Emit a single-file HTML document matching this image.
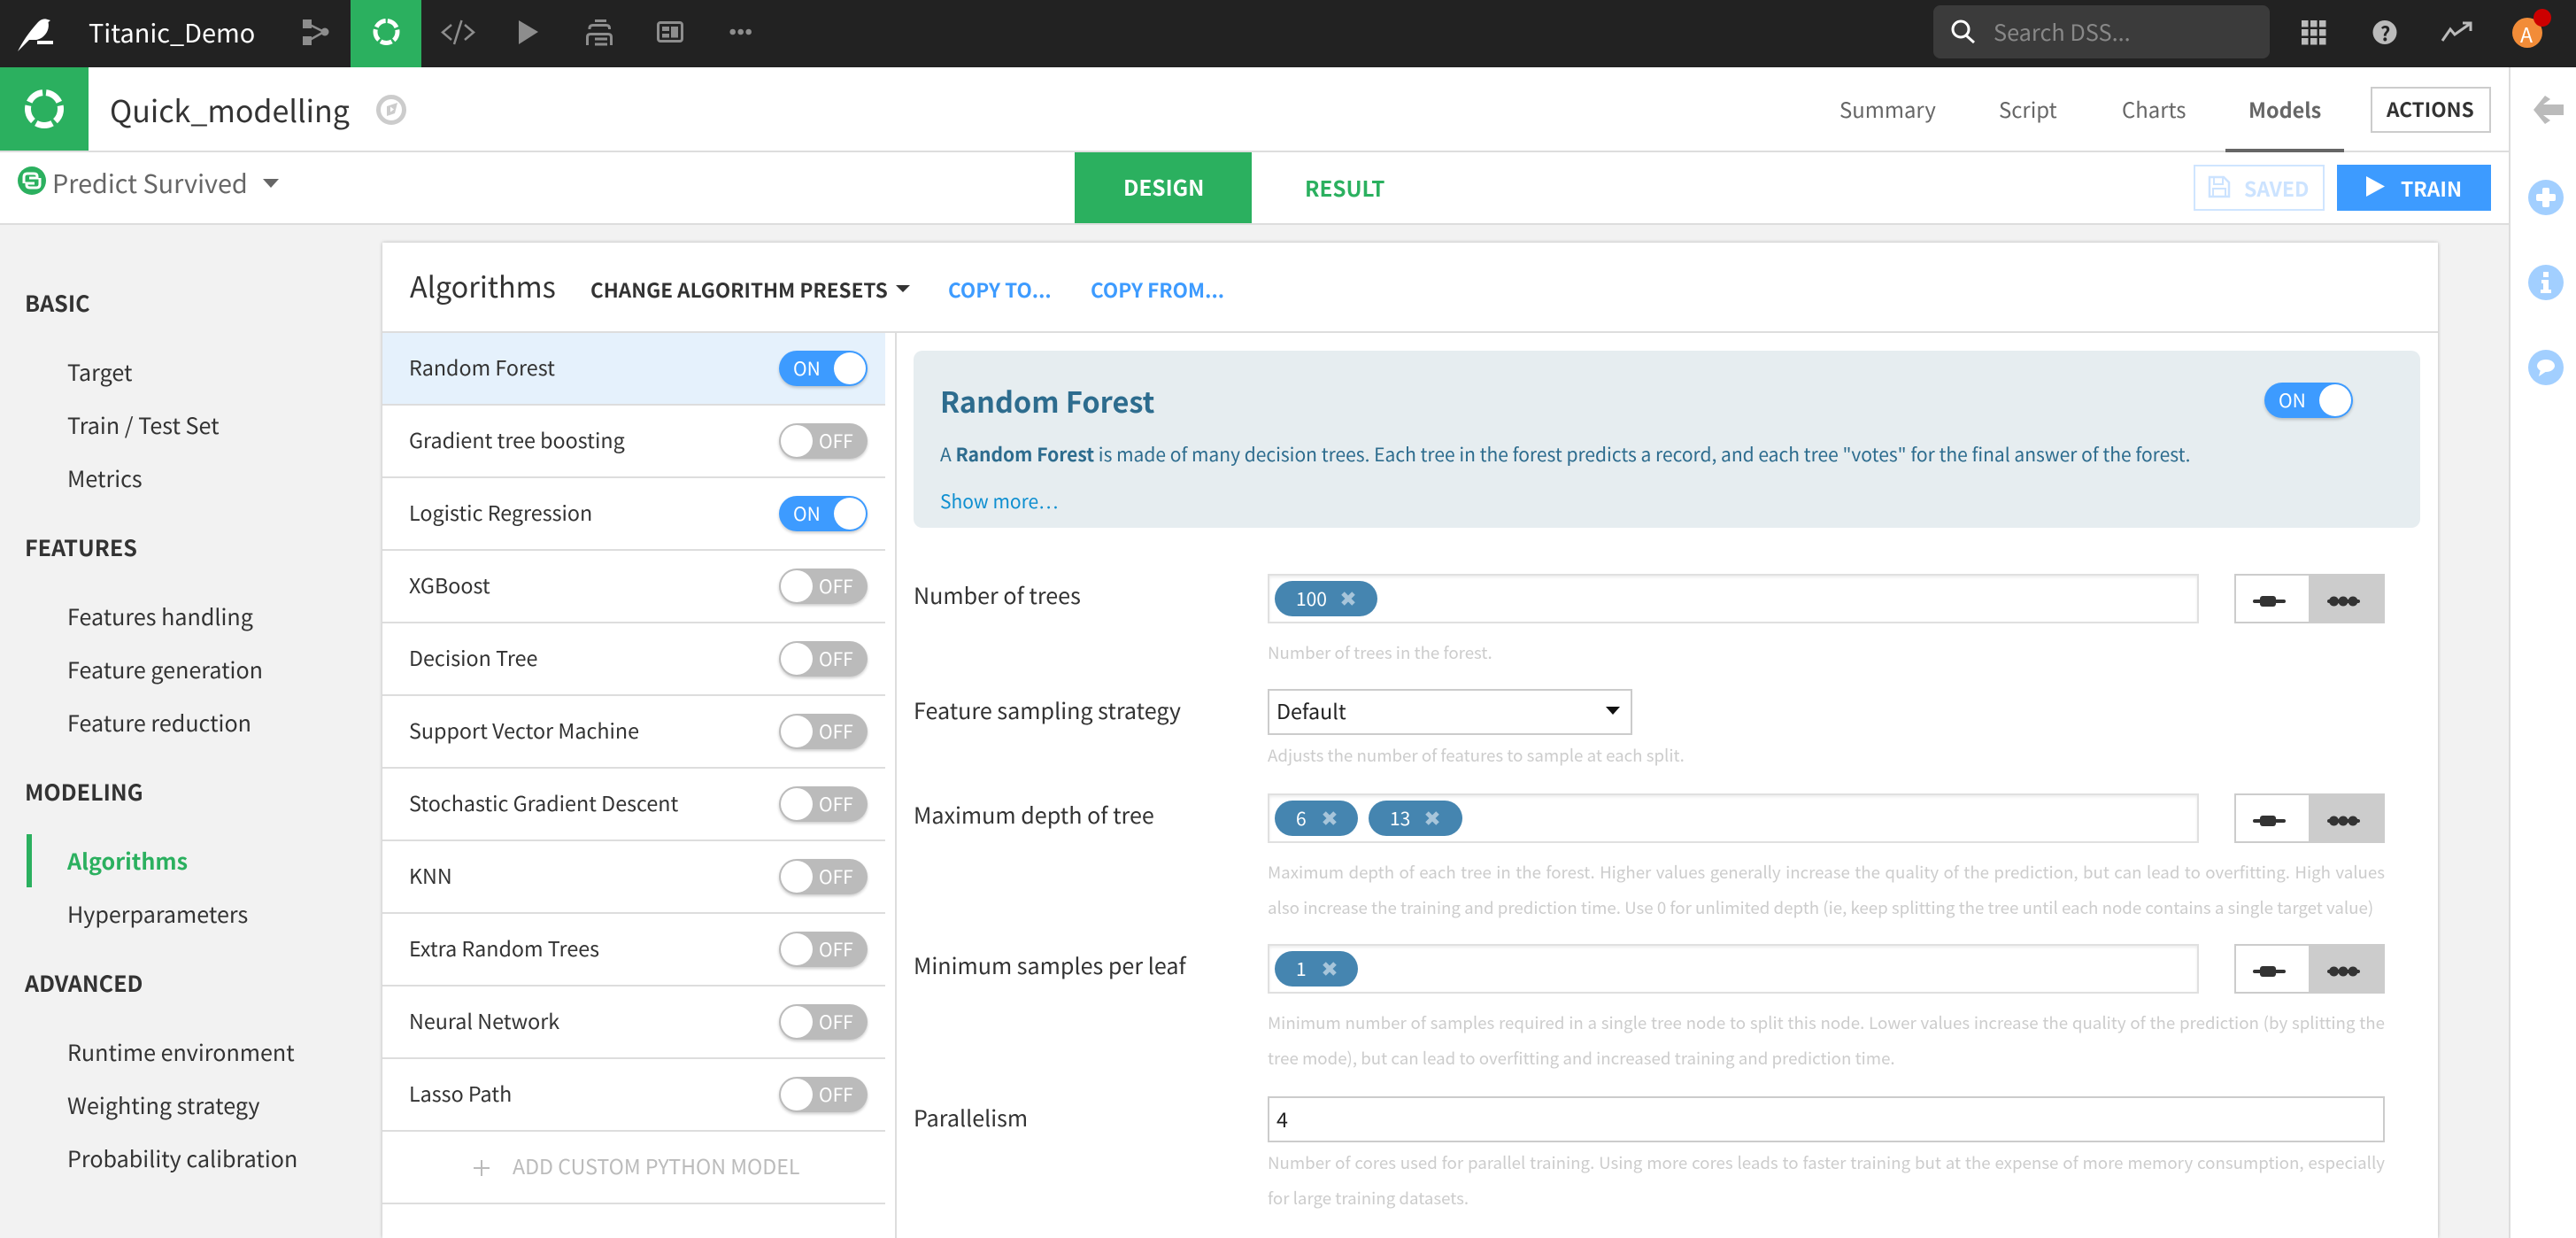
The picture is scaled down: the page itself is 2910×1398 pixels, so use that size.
<!DOCTYPE html>
<html><head><meta charset="utf-8"><title>Quick_modelling</title>
<style>
html,body{margin:0;padding:0;width:2910px;height:1398px;overflow:hidden;background:#f2f2f2}
body{position:relative;font-family:"Noto Sans CJK JP","Liberation Sans",sans-serif;color:#333}
.b{position:absolute}
.t{position:absolute;white-space:nowrap;line-height:0;font-size:25.1px}
.h{font-weight:700}
.r{height:2px;left:432px;width:568px;background:#ddd;position:absolute}
.l{font-size:23.3px}
.tg{position:absolute;width:100px;height:40px;border-radius:20px;box-shadow:0 2px 3px rgba(0,0,0,.2)}
.tg i{position:absolute;top:2px;width:36px;height:36px;border-radius:50%;background:#fff}
.tg span{position:absolute;top:20px;line-height:0;font-size:21px;color:#fff}
.on{background:#3d9bff}.on i{right:2px}.on span{left:16px}
.off{background:#bbb}.off i{left:2px}.off span{left:45px}
.in{position:absolute;left:1432px;width:1052px;height:56px;box-sizing:border-box;border:2px solid #e0e0e0;background:#fff;box-shadow:inset 0 2px 3px rgba(0,0,0,.08)}
.c{position:absolute;height:40px;border-radius:20px;background:#4585b0}
.c span{position:absolute;top:20px;line-height:0;font-size:21px;color:#fff}
.c svg{position:absolute;top:12px}
.lab{font-size:25.1px}
.hp{font-size:18.7px;color:#ccc;left:1432px}
.j{width:1262px;white-space:normal;text-align:justify;text-align-last:justify}
.pair{position:absolute;left:2524px;width:170px;height:56px;box-sizing:border-box;border:2px solid #ccc;background:linear-gradient(90deg,#fff 0 82px,#ccc 82px)}
.cp{font-size:22.5px}
</style></head><body>
<!-- top bar -->
<div class="b" style="left:0;top:0;width:2910px;height:76px;background:#222"></div>
<div class="b" style="left:396px;top:0;width:80px;height:76px;background:#2bb05f"></div>
<svg class="b" style="left:0;top:0" width="900" height="76">
<path fill="#fff" d="M20 58C25 48 32 37 43 25C46 22 49 21 52 21.500L57 23L54.500 25C56 32 53 38 48 42C45 44 42 45 40 45H33Z"/>
<rect x="42" y="46" width="18" height="4" fill="#fff"/>
<g fill="#8d8d8d"><rect x="342" y="22" width="10" height="10"/><rect x="342" y="41" width="10" height="10"/><circle cx="367" cy="36" r="4.5"/></g>
<path d="M350 28L366 36L350 45" fill="none" stroke="#8d8d8d" stroke-width="2.5"/>
<circle cx="436.500" cy="36" r="12.500" fill="none" stroke="#fff" stroke-width="5" stroke-dasharray="13 2.700" stroke-dashoffset="-1.350" transform="rotate(-90 436.500 36)"/>
<g fill="none" stroke="#8d8d8d" stroke-width="2.500"><path d="M510 28L500 36.500L510 45M525 28L535 36.500L525 45M521.500 23L513 50"/></g>
<polygon points="586,23 608,36 586,50" fill="#8d8d8d"/>
<g fill="none" stroke="#8d8d8d" stroke-width="3"><path d="M672 23.500H685"/><path d="M666 33V32Q666 28.500 670 28.500H685Q688.500 28.500 688.500 32V33"/><path d="M663.500 51V42Q663.500 38.500 667 38.500H687Q690.500 38.500 690.500 42V51"/><path d="M672 44H686M672 50H686"/></g>
<rect x="743.500" y="25.500" width="27" height="21" rx="2.500" fill="none" stroke="#8d8d8d" stroke-width="3"/>
<g fill="#8d8d8d"><rect x="748" y="30" width="8" height="5"/><rect x="748" y="38" width="8" height="4.500"/><rect x="758" y="30" width="8" height="12.500"/><circle cx="827.700" cy="36" r="3.300"/><circle cx="836.700" cy="36" r="3.300"/><circle cx="845.700" cy="36" r="3.300"/></g>
</svg>
<div class="t" style="left:100px;top:36px;font-size:28.9px;color:#fff">Titanic_Demo</div>
<div class="b" style="left:2184px;top:6px;width:380px;height:60px;background:#3b3b3b;border-radius:8px"></div>
<svg class="b" style="left:2190px;top:0" width="720" height="76">
<circle cx="25" cy="33" r="9" fill="none" stroke="#fff" stroke-width="3"/><path d="M31 40L40 48" stroke="#fff" stroke-width="3"/>
<g fill="#bbb"><rect x="410" y="23" width="7.500" height="7.500"/><rect x="420" y="23" width="7.500" height="7.500"/><rect x="430" y="23" width="7.500" height="7.500"/><rect x="410" y="33" width="7.500" height="7.500"/><rect x="420" y="33" width="7.500" height="7.500"/><rect x="430" y="33" width="7.500" height="7.500"/><rect x="410" y="43" width="7.500" height="7.500"/><rect x="420" y="43" width="7.500" height="7.500"/><rect x="430" y="43" width="7.500" height="7.500"/></g>
<circle cx="504" cy="36.500" r="13.500" fill="#bbb"/>
<path d="M569 46L578 33L583 39L600 27M592 26H601V35" fill="none" stroke="#bbb" stroke-width="3"/>
<circle cx="665" cy="37" r="17" fill="#f28c38"/>
<circle cx="682" cy="20" r="10" fill="#c00"/>
</svg>
<div class="t" style="left:2252px;top:36px;font-size:25.3px;color:#888">Search DSS...</div>
<div class="t h" style="left:2689px;top:37px;font-size:22px;color:#222">?</div>
<div class="t" style="left:2847px;top:38px;font-size:23px;color:#fff">A</div>
<!-- header row -->
<div class="b" style="left:0;top:76px;width:2834px;height:94px;background:#fff"></div>
<div class="b" style="left:0;top:170px;width:2834px;height:2px;background:#ddd"></div>
<div class="b" style="left:0;top:172px;width:2834px;height:80px;background:#fff"></div>
<div class="b" style="left:0;top:252px;width:2834px;height:2px;background:#ddd"></div>
<div class="b" style="left:2836px;top:76px;width:74px;height:1322px;background:#fff"></div>
<div class="b" style="left:2834px;top:76px;width:2px;height:1322px;background:#ddd"></div>
<div class="b" style="left:0;top:76px;width:100px;height:94px;background:#2bb05f"></div>
<svg class="b" style="left:0;top:76px" width="500" height="178">
<circle cx="50" cy="47" r="18.500" fill="none" stroke="#fff" stroke-width="7" stroke-dasharray="19 4.250" stroke-dashoffset="-2.100" transform="rotate(-90 50 47)"/>
<circle cx="442" cy="48" r="14.500" fill="none" stroke="#ccc" stroke-width="5"/>
<polygon points="437,44 449,40 446,52 437,55" fill="#ccc"/><polygon points="441,44.500 445,47.500 441,50.500" fill="#fff"/>
<circle cx="36" cy="128" r="16" fill="#2bb05f"/>
<g fill="none" stroke="#fff" stroke-width="3"><path d="M27 131V124Q27 120 31 120H38Q42 120 42 123V125H33"/><path d="M45 125V132Q45 136 41 136H34Q30 136 30 133V131H39"/></g>
<polygon points="297,126 315,126 306,136" fill="#666"/>
</svg>
<div class="t" style="left:124px;top:124px;font-size:34px;color:#333">Quick_modelling</div>
<div class="t" style="left:59px;top:207px;font-size:28.8px;color:#666">Predict Survived</div>
<div class="t" style="left:2078px;top:123px;font-size:23.9px;color:#666">Summary</div>
<div class="t" style="left:2258px;top:123px;font-size:23.9px;color:#666">Script</div>
<div class="t" style="left:2397px;top:123px;font-size:23.9px;color:#666">Charts</div>
<div class="t h" style="left:2540px;top:123px;font-size:23.4px;color:#666">Models</div>
<div class="b" style="left:2514px;top:168px;width:134px;height:4px;background:#666"></div>
<div class="b" style="left:2678px;top:98px;width:136px;height:52px;box-sizing:border-box;border:2px solid #ccc;background:#fff"></div>
<div class="t h" style="left:2696px;top:123px;font-size:22.6px;color:#333">ACTIONS</div>
<div class="b" style="left:1214px;top:172px;width:200px;height:80px;background:#2bb05f"></div>
<div class="t h" style="left:1269px;top:212px;font-size:24.4px;color:#fff">DESIGN</div>
<div class="t h" style="left:1474px;top:212px;font-size:24.2px;color:#2bb05f">RESULT</div>
<div class="b" style="left:2478px;top:186px;width:148px;height:52px;box-sizing:border-box;border:2px solid #cfe5ff;background:#fff"></div>
<svg class="b" style="left:2490px;top:195px" width="34" height="32"><path d="M6 5H22L28 11V27H6Z" fill="none" stroke="#cce3ff" stroke-width="2.500"/><rect x="11" y="5" width="10" height="8" fill="none" stroke="#cce3ff" stroke-width="2"/><rect x="10" y="18" width="14" height="9" fill="none" stroke="#cce3ff" stroke-width="2"/></svg>
<div class="t h" style="left:2535px;top:212px;font-size:23px;color:#cce3ff">SAVED</div>
<div class="b" style="left:2640px;top:186px;width:174px;height:52px;background:#3d9bff"></div>
<svg class="b" style="left:2673px;top:199px" width="22" height="24"><polygon points="0,0 21,11.500 0,23" fill="#fff"/></svg>
<div class="t h" style="left:2712px;top:212px;font-size:22.9px;color:#fff">TRAIN</div>
<svg class="b" style="left:2856px;top:100px" width="44" height="340">
<path d="M19 8L6 24L19 40L25 36L17 30H40V18H17L25 12Z" fill="#bbb"/>
<g fill="#a2cfff"><circle cx="20" cy="123" r="20"/><circle cx="20" cy="219" r="20"/><circle cx="20" cy="315" r="20"/></g>
<g fill="#fff"><rect x="9" y="119" width="22" height="8" rx="2"/><rect x="16" y="112" width="8" height="22" rx="2"/>
<rect x="17" y="207" width="6" height="6"/><path d="M15 216H23V227H26V231H14V227H17V220H15Z"/>
<ellipse cx="20" cy="313" rx="10" ry="7"/><path d="M14 317L12 325L21 319Z"/></g>
</svg>
<!-- sidebar -->
<div class="t h" style="left:28px;top:342px">BASIC</div>
<div class="t" style="left:76px;top:420px">Target</div>
<div class="t" style="left:76px;top:480px">Train / Test Set</div>
<div class="t" style="left:76px;top:540px">Metrics</div>
<div class="t h" style="left:28px;top:618px">FEATURES</div>
<div class="t" style="left:76px;top:696px">Features handling</div>
<div class="t" style="left:76px;top:756px">Feature generation</div>
<div class="t" style="left:76px;top:816px">Feature reduction</div>
<div class="t h" style="left:28px;top:894px">MODELING</div>
<div class="b" style="left:30px;top:942px;width:6px;height:60px;background:#2bb05f"></div>
<div class="t h" style="left:76px;top:972px;color:#2bb05f">Algorithms</div>
<div class="t" style="left:76px;top:1032px">Hyperparameters</div>
<div class="t h" style="left:28px;top:1110px">ADVANCED</div>
<div class="t" style="left:76px;top:1188px">Runtime environment</div>
<div class="t" style="left:76px;top:1248px">Weighting strategy</div>
<div class="t" style="left:76px;top:1308px">Probability calibration</div>
<!-- card -->
<div class="b" style="left:432px;top:274px;width:2322px;height:1124px;background:#fff;box-shadow:0 0 4px rgba(0,0,0,.25)"></div>
<div class="b" style="left:432px;top:374px;width:2322px;height:2px;background:#ddd"></div>
<div class="b" style="left:1011px;top:376px;width:2px;height:1022px;background:#ddd"></div>
<div class="t" style="left:463px;top:323px;font-size:32.4px">Algorithms</div>
<div class="t h cp" style="left:667px;top:327px">CHANGE ALGORITHM PRESETS</div>
<svg class="b" style="left:1012px;top:322px" width="16" height="9"><polygon points="0,0 16,0 8,8" fill="#333"/></svg>
<div class="t h cp" style="left:1071px;top:327px;color:#3d9bff">COPY TO...</div>
<div class="t h cp" style="left:1232px;top:327px;color:#3d9bff">COPY FROM...</div>
<!-- list -->
<div class="b" style="left:432px;top:376px;width:568px;height:80px;background:#e5f1fc"></div>
<div class="r" style="top:456px"></div><div class="r" style="top:538px"></div><div class="r" style="top:620px"></div><div class="r" style="top:702px"></div><div class="r" style="top:784px"></div><div class="r" style="top:866px"></div><div class="r" style="top:948px"></div><div class="r" style="top:1030px"></div><div class="r" style="top:1112px"></div><div class="r" style="top:1194px"></div><div class="r" style="top:1276px"></div><div class="r" style="top:1358px"></div>
<div class="t l" style="left:462px;top:414px">Random Forest</div><div class="tg on" style="left:880px;top:396px"><span>ON</span><i></i></div>
<div class="t l" style="left:462px;top:496px">Gradient tree boosting</div><div class="tg off" style="left:880px;top:478px"><i></i><span>OFF</span></div>
<div class="t l" style="left:462px;top:578px">Logistic Regression</div><div class="tg on" style="left:880px;top:560px"><span>ON</span><i></i></div>
<div class="t l" style="left:462px;top:660px">XGBoost</div><div class="tg off" style="left:880px;top:642px"><i></i><span>OFF</span></div>
<div class="t l" style="left:462px;top:742px">Decision Tree</div><div class="tg off" style="left:880px;top:724px"><i></i><span>OFF</span></div>
<div class="t l" style="left:462px;top:824px">Support Vector Machine</div><div class="tg off" style="left:880px;top:806px"><i></i><span>OFF</span></div>
<div class="t l" style="left:462px;top:906px">Stochastic Gradient Descent</div><div class="tg off" style="left:880px;top:888px"><i></i><span>OFF</span></div>
<div class="t l" style="left:462px;top:988px">KNN</div><div class="tg off" style="left:880px;top:970px"><i></i><span>OFF</span></div>
<div class="t l" style="left:462px;top:1070px">Extra Random Trees</div><div class="tg off" style="left:880px;top:1052px"><i></i><span>OFF</span></div>
<div class="t l" style="left:462px;top:1152px">Neural Network</div><div class="tg off" style="left:880px;top:1134px"><i></i><span>OFF</span></div>
<div class="t l" style="left:462px;top:1234px">Lasso Path</div><div class="tg off" style="left:880px;top:1216px"><i></i><span>OFF</span></div>
<svg class="b" style="left:534px;top:1309px" width="20" height="20"><path d="M10 1V19M1 10H19" stroke="#bbb" stroke-width="2"/></svg>
<div class="t" style="left:579px;top:1316px;font-size:23.2px;color:#bbb">ADD CUSTOM PYTHON MODEL</div>
<!-- info box -->
<div class="b" style="left:1032px;top:396px;width:1702px;height:200px;background:#e6edf0;border-radius:10px"></div>
<div class="t h" style="left:1062px;top:453px;font-size:32.5px;color:#2d6c8e">Random Forest</div>
<div class="t" style="left:1062px;top:513px;font-size:21px;color:#2d6c8e">A <b>Random Forest</b> is made of many decision trees. Each tree in the forest predicts a record, and each tree "votes" for the final answer of the forest.</div>
<div class="t" style="left:1062px;top:566px;font-size:21px;color:#0e8fd0">Show more…</div>
<div class="tg on" style="left:2558px;top:432px"><span>ON</span><i></i></div>
<!-- fields -->
<div class="t lab" style="left:1032px;top:672px">Number of trees</div>
<div class="in" style="top:648px"></div>
<div class="c" style="left:1440px;top:656px;width:116px"><span style="left:24px">100</span><svg style="left:75px" width="16" height="16"><path d="M2 2L14 14M14 2L2 14" stroke="#a7c5da" stroke-width="5"/></svg></div>
<div class="pair" style="top:648px"></div>
<div class="t hp" style="top:737px">Number of trees in the forest.</div>
<div class="t lab" style="left:1032px;top:802px">Feature sampling strategy</div>
<div class="b" style="left:1432px;top:778px;width:412px;height:52px;box-sizing:border-box;border:2px solid #ccc;background:#fff"></div>
<div class="t" style="left:1442px;top:802px;font-size:23.3px;color:#222">Default</div>
<svg class="b" style="left:1814px;top:798px" width="16" height="10"><polygon points="0,0 16,0 8,9" fill="#111"/></svg>
<div class="t hp" style="top:853px">Adjusts the number of features to sample at each split.</div>
<div class="t lab" style="left:1032px;top:920px">Maximum depth of tree</div>
<div class="in" style="top:896px"></div>
<div class="c" style="left:1440px;top:904px;width:94px"><span style="left:24px">6</span><svg style="left:54px" width="16" height="16"><path d="M2 2L14 14M14 2L2 14" stroke="#a7c5da" stroke-width="5"/></svg></div>
<div class="c" style="left:1546px;top:904px;width:106px"><span style="left:24px">13</span><svg style="left:64px" width="16" height="16"><path d="M2 2L14 14M14 2L2 14" stroke="#a7c5da" stroke-width="5"/></svg></div>
<div class="pair" style="top:896px"></div>
<div class="t hp j" style="top:985px">Maximum depth of each tree in the forest. Higher values generally increase the quality of the prediction, but can lead to overfitting. High values</div>
<div class="t hp" style="top:1025px">also increase the training and prediction time. Use 0 for unlimited depth (ie, keep splitting the tree until each node contains a single target value)</div>
<div class="t lab" style="left:1032px;top:1090px">Minimum samples per leaf</div>
<div class="in" style="top:1066px"></div>
<div class="c" style="left:1440px;top:1074px;width:94px"><span style="left:24px">1</span><svg style="left:54px" width="16" height="16"><path d="M2 2L14 14M14 2L2 14" stroke="#a7c5da" stroke-width="5"/></svg></div>
<div class="pair" style="top:1066px"></div>
<div class="t hp j" style="top:1155px">Minimum number of samples required in a single tree node to split this node. Lower values increase the quality of the prediction (by splitting the</div>
<div class="t hp" style="top:1195px">tree mode), but can lead to overfitting and increased training and prediction time.</div>
<div class="t lab" style="left:1032px;top:1262px">Parallelism</div>
<div class="b" style="left:1432px;top:1238px;width:1262px;height:52px;box-sizing:border-box;border:2px solid #ccc;background:#fff"></div>
<div class="t" style="left:1442px;top:1263px;font-size:23.3px;color:#222">4</div>
<div class="t hp j" style="top:1313px">Number of cores used for parallel training. Using more cores leads to faster training but at the expense of more memory consumption, especially</div>
<div class="t hp" style="top:1353px">for large training datasets.</div>
<!-- pair icons -->
<svg class="b" style="left:2540px;top:640px" width="140" height="500">
<g fill="#333">
<g><rect x="5" y="37" width="37" height="4" rx="2"/><rect x="13" y="33" width="18" height="12" rx="3"/><rect x="89" y="37" width="37" height="4" rx="2"/><circle cx="96.500" cy="39" r="5.500"/><circle cx="107" cy="39" r="5.500"/><circle cx="118" cy="39" r="5.500"/></g>
<g transform="translate(0 248)"><rect x="5" y="37" width="37" height="4" rx="2"/><rect x="13" y="33" width="18" height="12" rx="3"/><rect x="89" y="37" width="37" height="4" rx="2"/><circle cx="96.500" cy="39" r="5.500"/><circle cx="107" cy="39" r="5.500"/><circle cx="118" cy="39" r="5.500"/></g>
<g transform="translate(0 418)"><rect x="5" y="37" width="37" height="4" rx="2"/><rect x="13" y="33" width="18" height="12" rx="3"/><rect x="89" y="37" width="37" height="4" rx="2"/><circle cx="96.500" cy="39" r="5.500"/><circle cx="107" cy="39" r="5.500"/><circle cx="118" cy="39" r="5.500"/></g>
</g></svg>
</body></html>
